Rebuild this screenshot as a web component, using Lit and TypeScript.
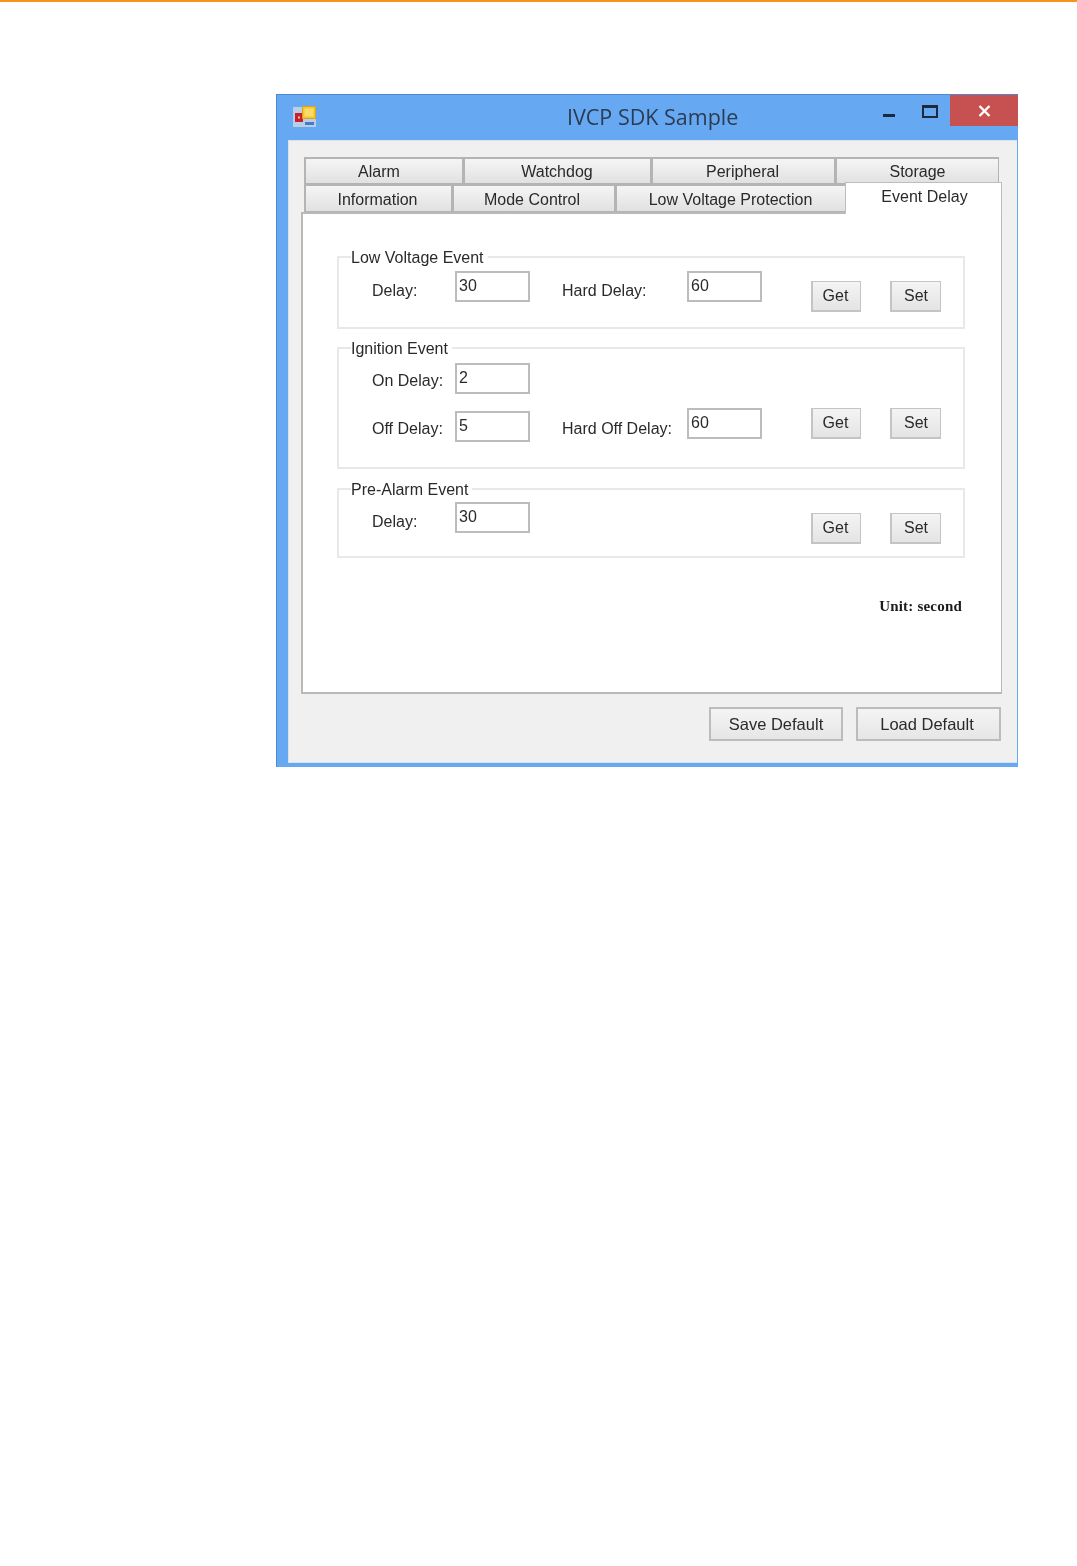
import { LitElement, html, css } from "lit";
import { customElement } from "lit/decorators.js";

interface Row {
  label: string;
  value: string;
  labelTop: number;
  top?: number;
  gapBefore?: number;
  hard?: { label: string; value: string };
  actionTop?: number;
}
interface Group {
  title: string;
  height: number;
  padTop: number;
  after: number;
  rows: Row[];
}

const GROUPS: Group[] = [
  {
    title: "Low Voltage Event",
    height: 73,
    padTop: 13,
    after: 18,
    rows: [{ label: "Delay:", value: "30", labelTop: 10, hard: { label: "Hard Delay:", value: "60" }, actionTop: 10 }],
  },
  {
    title: "Ignition Event",
    height: 122,
    padTop: 14,
    after: 19,
    rows: [
      { label: "On Delay:", value: "2", labelTop: 8 },
      { label: "Off Delay:", value: "5", labelTop: 11, top: 3, gapBefore: 14, hard: { label: "Hard Off Delay:", value: "60" }, actionTop: 0 },
    ],
  },
  {
    title: "Pre-Alarm Event",
    height: 70,
    padTop: 12,
    after: 38,
    rows: [{ label: "Delay:", value: "30", labelTop: 10, actionTop: 11 }],
  },
];

@customElement("app-root")
export class AppRoot extends LitElement {
  static styles = css`
    :host {
      display: block;
      width: 1077px;
      height: 1566px;
      background: #fff;
      font-family: "Liberation Sans", Arial, sans-serif;
      font-size: 16px;
      color: #2a2a2a;
    }
    .rule { height: 2px; background: #f7941d; }
    .page { padding: 92px 59px 0 276px; }
    .window {
      width: 742px;
      height: 673px;
      box-sizing: border-box;
      background: #67a8f2;
      border-top: 1px solid #4f8ad0;
      border-left: 1px solid #4f8ad0;
      display: flex;
      flex-direction: column;
      filter: blur(0.6px);
    }
    .titlebar { height: 45px; flex: none; display: flex; align-items: flex-start; }
    .app-icon { width: 24px; height: 22px; margin: 11px 0 0 16px; flex: none; }
    .title {
      margin: 6px 0 0 250px;
      flex: 1;
      font: 21.5px/32px "Open Sans", sans-serif;
      color: #2b3c50;
      white-space: nowrap;
    }
    .min { width: 12px; height: 3px; margin: 19px 27px 0 0; background: #1d2a3a; flex: none; }
    .max { width: 12px; height: 8px; margin: 10px 12px 0 0; border: 2px solid #1d2a3a; border-top-width: 3px; flex: none; }
    .close {
      width: 68px; height: 31px; background: #c75050; flex: none;
      display: flex; align-items: center; justify-content: center;
    }
    .client {
      margin: 0 1px 4px 11px;
      flex: 1;
      min-height: 0;
      box-sizing: border-box;
      background: #f0f0f0;
      border: 1px solid #d9e2ec;
      border-width: 1px 0 1px 1px;
      padding: 16px 0 0 12px;
    }
    .tabrow { display: flex; margin-left: 3px; }
    .tabrow.upper { height: 27px; }
    .tabrow.lower { height: 28px; align-items: flex-end; }
    .tab {
      box-sizing: border-box;
      height: 100%;
      padding-top: 2px;
      border: 2px solid #b4b4b4;
      border-bottom-width: 1px;
      border-right-width: 1px;
      background: linear-gradient(#f5f5f5, #e1e1e1);
      display: flex;
      align-items: center;
      justify-content: center;
      white-space: nowrap;
    }
    .tab.active {
      position: relative;
      z-index: 1;
      height: 32px;
      margin-left: -1px;
      margin-bottom: -2px;
      background: #fff;
      border: 1px solid #bdbdbd;
      border-bottom: none;
      align-items: flex-start;
      padding: 5px 0 0 2px;
    }
    .panel {
      box-sizing: border-box;
      width: 701px;
      height: 482px;
      background: #fff;
      border: 1px solid #b9b9b9;
      border-width: 2px 1px 2px 2px;
      padding: 42px 0 0 34px;
    }
    .group {
      position: relative;
      box-sizing: border-box;
      width: 628px;
      border: 2px solid #e8e8e8;
      padding-left: 33px;
    }
    .legend {
      position: absolute;
      top: -10px;
      left: 12px;
      padding-right: 4px;
      background: #fff;
      line-height: 20px;
      white-space: nowrap;
    }
    .rows { display: flex; flex-direction: column; }
    .row { display: flex; align-items: flex-start; }
    .label { white-space: nowrap; line-height: 20px; }
    .label.first { width: 83px; flex: none; }
    .label.second { width: 125px; flex: none; margin-left: 32px; }
    .field {
      box-sizing: border-box;
      width: 75px;
      height: 31px;
      flex: none;
      background: #fff;
      border: 2px solid #bcbcbc;
      padding-left: 2px;
      line-height: 26px;
    }
    .actions { margin-left: auto; margin-right: 22px; display: flex; gap: 29px; }
    .btn {
      box-sizing: border-box;
      height: 31px;
      border: 2px solid #c4c4c4;
      border-width: 1px 1px 2px 2px;
      background: linear-gradient(#f4f4f4, #e4e4e4);
      display: flex;
      align-items: center;
      justify-content: center;
      white-space: nowrap;
    }
    .btn.get { width: 50px; padding-right: 2px; }
    .btn.set { width: 51px; }
    .unit {
      margin-right: 39px;
      text-align: right;
      font: bold 15px/20px "Liberation Serif", serif;
      letter-spacing: 0.2px;
      color: #1c1c1c;
    }
    .footer { display: flex; margin-top: 13px; margin-left: 408px; gap: 13px; }
    .btn.big { height: 34px; width: 134px; border: 2px solid #bcbcbc; background: linear-gradient(#f4f4f4, #e6e6e6); font-size: 16.5px; }
    .btn.big.load { width: 145px; padding-right: 3px; }
  `;

  private row(r: Row) {
    const labelStyle = `margin-top:${r.labelTop}px`;
    return html`
      <div class="row" style=${r.gapBefore ? `margin-top:${r.gapBefore}px` : ""}>
        <div class="label first" style=${labelStyle}>${r.label}</div>
        <div class="field" style=${r.top ? `margin-top:${r.top}px` : ""}>${r.value}</div>
        ${r.hard
          ? html`<div class="label second" style=${labelStyle}>${r.hard.label}</div>
              <div class="field">${r.hard.value}</div>`
          : ""}
        ${r.actionTop !== undefined
          ? html`<div class="actions" style="margin-top:${r.actionTop}px">
              <div class="btn get">Get</div>
              <div class="btn set">Set</div>
            </div>`
          : ""}
      </div>
    `;
  }

  render() {
    const upper: [string, number, number][] = [["Alarm", 159, 10], ["Watchdog", 188, 1], ["Peripheral", 184, 2], ["Storage", 164, 0]];
    const lower: [string, number, number][] = [["Information", 148, 2], ["Mode Control", 163, 4], ["Low Voltage Protection", 231, 1]];
    const tab = ([t, w, shift]: [string, number, number]) =>
      html`<div class="tab" style="width:${w}px;padding-right:${shift}px">${t}</div>`;
    return html`
      <div class="rule"></div>
      <div class="page">
        <div class="window">
          <div class="titlebar">
            <svg class="app-icon" viewBox="0 0 24 22">
              <rect x="0" y="1" width="23" height="20" fill="#b9cfe8" />
              <rect x="2" y="7" width="8" height="9" fill="#c8202a" />
              <rect x="5" y="10.5" width="2" height="2" fill="#f3c0c0" />
              <rect x="9.5" y="0.5" width="13" height="12" fill="#f7c52e" stroke="#d9a420" />
              <rect x="11.5" y="2.5" width="9" height="8" fill="#fbdc6a" />
              <rect x="12" y="16" width="9" height="3" fill="#4a78c8" />
            </svg>
            <div class="title">IVCP SDK Sample</div>
            <div class="min"></div>
            <div class="max"></div>
            <div class="close">
              <svg width="13" height="12" viewBox="0 0 13 12">
                <path d="M1.5 1 L11.5 11 M11.5 1 L1.5 11" stroke="#fff" stroke-width="2.4" fill="none" />
              </svg>
            </div>
          </div>
          <div class="client">
            <div class="tabrow upper">${upper.map(tab)}</div>
            <div class="tabrow lower">
              ${lower.map(tab)}
              <div class="tab active" style="width:157px">Event Delay</div>
            </div>
            <div class="panel">
              ${GROUPS.map(
                (g) => html`
                  <div class="group" style="height:${g.height}px;padding-top:${g.padTop}px;margin-bottom:${g.after}px">
                    <div class="legend">${g.title}</div>
                    <div class="rows">${g.rows.map((r) => this.row(r))}</div>
                  </div>
                `
              )}
              <div class="unit">Unit: second</div>
            </div>
            <div class="footer">
              <div class="btn big">Save Default</div>
              <div class="btn big load">Load Default</div>
            </div>
          </div>
        </div>
      </div>
    `;
  }
}
